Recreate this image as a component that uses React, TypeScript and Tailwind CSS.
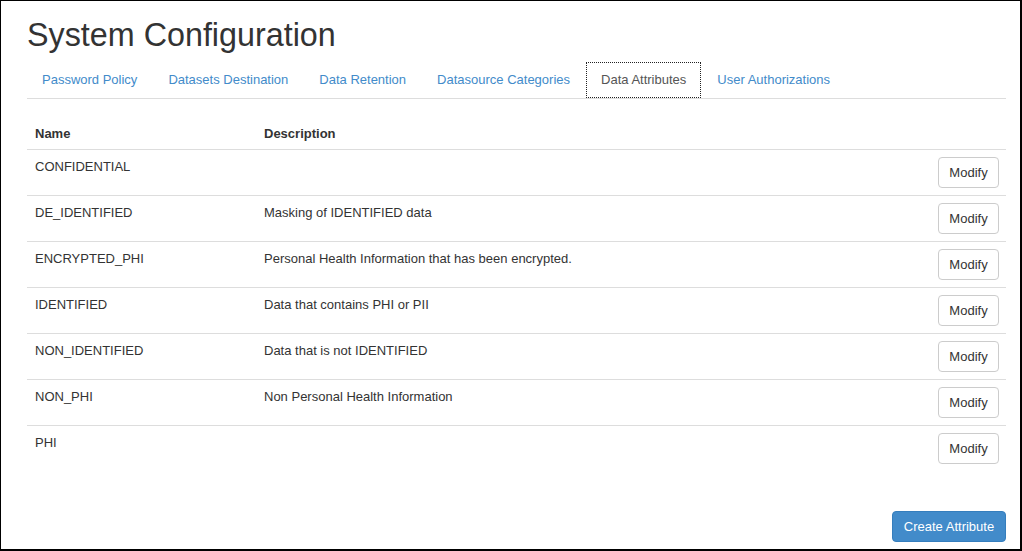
import React from "react";

const tabs = [
  "Password Policy",
  "Datasets Destination",
  "Data Retention",
  "Datasource Categories",
  "Data Attributes",
  "User Authorizations",
];

const rows: [string, string][] = [
  ["CONFIDENTIAL", ""],
  ["DE_IDENTIFIED", "Masking of IDENTIFIED data"],
  ["ENCRYPTED_PHI", "Personal Health Information that has been encrypted."],
  ["IDENTIFIED", "Data that contains PHI or PII"],
  ["NON_IDENTIFIED", "Data that is not IDENTIFIED"],
  ["NON_PHI", "Non Personal Health Information"],
  ["PHI", ""],
];

export default function App() {
  return (
    <div
      className="w-[1022px] h-[551px] bg-white border-l border-t border-r-2 border-b-2 border-black pl-[26px] pr-[14px] pt-[16px] text-[#333] overflow-hidden"
      style={{ fontFamily: '"Liberation Sans", Arial, sans-serif' }}
    >
      <h1 className="text-[32.3px] leading-[36px] font-normal text-[#333]">System Configuration</h1>

      <div className="mt-[9px] flex border-b border-[#ddd] h-[37px]">
        {tabs.map((t) => {
          const active = t === "Data Attributes";
          return (
            <div
              key={t}
              className={
                "mr-[1px] h-[36px] px-[14px] flex items-center text-[13px] leading-[18px] border " +
                (active
                  ? "border-dotted border-[#222] text-[#555] bg-white"
                  : "border-transparent text-[#428bca]")
              }
            >
              {t}
            </div>
          );
        })}
      </div>

      <div className="mt-[16px] text-[13px] leading-[18px]">
        <div className="grid grid-cols-[229px_1fr_auto] font-bold">
          <div className="pl-[8px] pt-[10px] pb-[6px]">Name</div>
          <div className="pl-[8px] pt-[10px] pb-[6px]">Description</div>
          <div />
        </div>
        {rows.map(([name, desc]) => (
          <div
            key={name}
            className="grid grid-cols-[229px_1fr_auto] border-t border-[#ddd] h-[46px] items-start"
          >
            <div className="pl-[8px] pt-[8px]">{name}</div>
            <div className="pl-[8px] pt-[8px]">{desc}</div>
            <div className="pr-[7px] pt-[7px]">
              <button className="w-[61px] h-[31px] flex items-center justify-center border border-[#ccc] rounded-[4px] bg-white text-[13px] text-[#333]">
                Modify
              </button>
            </div>
          </div>
        ))}
      </div>

      <div className="flex justify-end mt-[40px]">
        <button className="w-[114px] h-[31px] flex items-center justify-center rounded-[4px] bg-[#428bca] border border-[#357ebd] text-white text-[13px]">
          Create Attribute
        </button>
      </div>
    </div>
  );
}
